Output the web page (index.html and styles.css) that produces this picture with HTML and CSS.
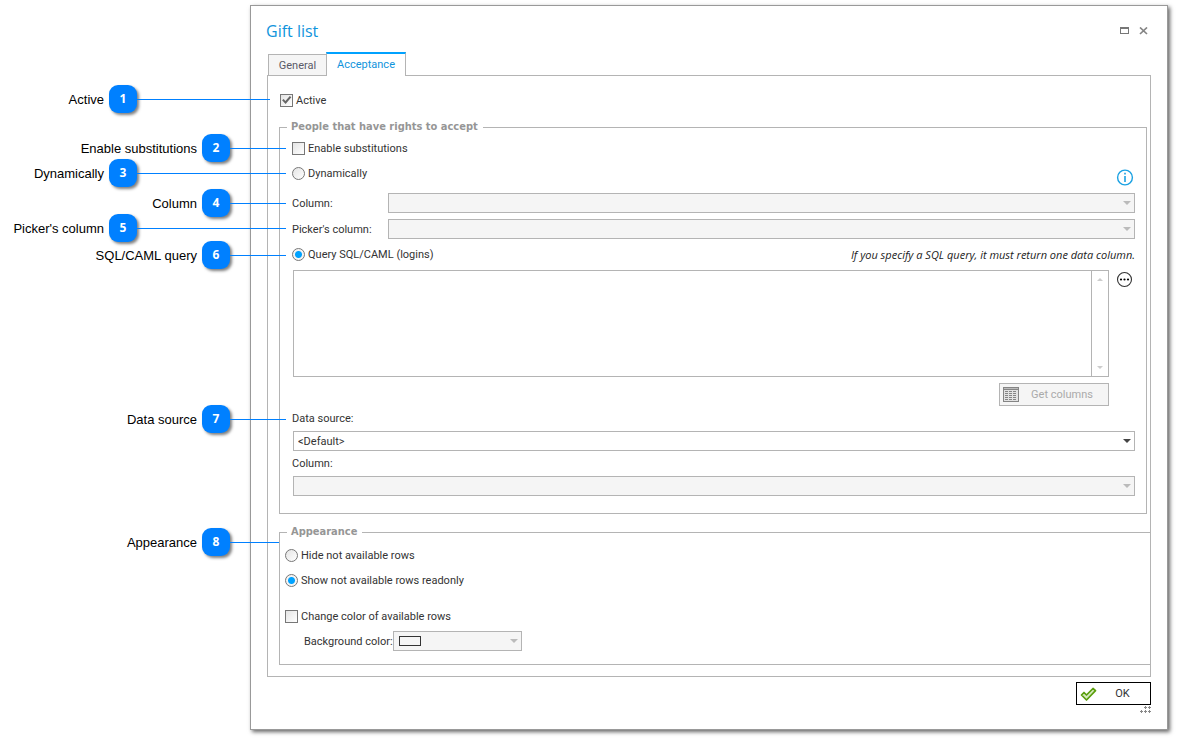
FILE: index.html
```html
<!DOCTYPE html>
<html lang="en">
<head>
<meta charset="utf-8">
<title>Gift list</title>
<link rel="stylesheet" href="styles.css">
</head>
<body>
<main class="stage">
  <section class="window" aria-labelledby="window-title">
    <header class="titlebar">
      <h1 class="title" id="window-title">Gift list</h1>
      <div class="window-actions">
        <button class="icon-button" type="button" aria-label="Maximize">
          <svg width="9" height="8" viewBox="0 0 9 8" shape-rendering="crispEdges"><path d="M0 0h9v7H0zM1 2v4h7V2z" fill="#777" fill-rule="evenodd"/></svg>
        </button>
        <button class="icon-button" type="button" aria-label="Close">
          <svg width="9" height="8" viewBox="0 0 9 8"><path d="M1 .5l7 6.500M8 .5l-7 6.500" stroke="#858585" stroke-width="1.700"/></svg>
        </button>
      </div>
    </header>

    <div class="tabs" role="tablist">
      <button class="tab" type="button" role="tab" aria-selected="false">General</button>
      <button class="tab tab-selected" type="button" role="tab" aria-selected="true">Acceptance</button>
    </div>

    <div class="panel" role="tabpanel">
      <label class="option option-active"><input class="check" type="checkbox" checked>Active</label>

      <fieldset class="group people">
        <legend class="legend">People that have rights to accept</legend>
        <label class="option"><input class="check" type="checkbox">Enable substitutions</label>
        <div class="row dynamic-row">
          <label class="option"><input class="radio" type="radio" name="source">Dynamically</label>
          <button class="icon-button side-button" type="button" aria-label="Information">
            <svg width="18" height="18" viewBox="0 0 18 18" fill="none" stroke="#1ba1e2"><circle cx="9" cy="8.500" r="7.4" stroke-width="1.4"/><path d="M9 7v6M9 3.700v1.8" stroke-width="1.6"/></svg>
          </button>
        </div>
        <div class="field-grid">
          <label for="column">Column:</label>
          <span class="select-box disabled"><select class="select" id="column" disabled></select></span>
          <label for="picker">Picker's column:</label>
          <span class="select-box disabled"><select class="select" id="picker" disabled></select></span>
        </div>
        <div class="row query-row">
          <label class="option"><input class="radio" type="radio" name="source" checked>Query SQL/CAML (logins)</label>
          <em class="hint">If you specify a SQL query, it must return one data column.</em>
        </div>
        <div class="editor-row">
          <div class="editor">
            <textarea class="query" aria-label="Query"></textarea>
            <div class="scroller"><span class="scroll-up"></span><span class="scroll-down"></span></div>
          </div>
          <button class="icon-button side-button" type="button" aria-label="Edit query">
            <svg width="18" height="18" viewBox="0 0 18 18"><circle cx="8.500" cy="9.500" r="7" fill="none" stroke="#333" stroke-width="1.1"/><circle cx="5" cy="9.500" r="1.1"/><circle cx="8.500" cy="9.500" r="1.1"/><circle cx="12" cy="9.500" r="1.1"/></svg>
          </button>
        </div>
        <div class="columns-row">
          <button class="columns-button" type="button" disabled>
            <svg width="16" height="16" viewBox="0 0 16 16" shape-rendering="crispEdges"><path d="M0 0h16v15H0z" fill="#858585"/><path d="M1 3h14v11H1z" fill="#e2e2e2"/><path d="M1 1h14v1H1z" fill="#bbb"/><path d="M2 4.500h12M2 6.500h12M2 8.500h12M2 10.500h12M2 12.500h12" stroke="#858585" stroke-dasharray="3 1"/></svg>
            <span class="columns-text">Get columns</span>
          </button>
        </div>
        <label class="field-label" for="data-source">Data source:</label>
        <span class="select-box"><select class="select" id="data-source"><option>&lt;Default&gt;</option></select></span>
        <label class="field-label" for="data-column">Column:</label>
        <span class="select-box disabled"><select class="select" id="data-column" disabled></select></span>
      </fieldset>

      <fieldset class="group appearance">
        <legend class="legend">Appearance</legend>
        <label class="option"><input class="radio" type="radio" name="rows">Hide not available rows</label>
        <label class="option"><input class="radio" type="radio" name="rows" checked>Show not available rows readonly</label>
        <label class="option option-color"><input class="check" type="checkbox">Change color of available rows</label>
        <div class="color-row">
          <label class="color-label" for="background">Background color:</label>
          <span class="select-box color-box disabled"><select class="select" id="background" disabled></select></span>
        </div>
      </fieldset>
    </div>

    <footer class="footer">
      <button class="ok-button" type="button">
        <svg width="18" height="16" viewBox="0 0 18 16"><path d="M1.500 9l2.500-2.500 2.500 2.500 6.500-6.500 2.500 2.200L6.500 14z" fill="#d6eabf" stroke="#5a9e0c" stroke-width="1.700" stroke-linejoin="round"/></svg>
        <span class="ok-text">OK</span>
      </button>
      <svg class="grip" width="11" height="7" viewBox="0 0 11 7"><path d="M4 1.500h3M8 1.500h3M0 5.500h3M4 5.500h3M8 5.500h3M5.500 0v3M9.500 0v3M1.500 4v3M5.500 4v3M9.500 4v3" stroke="#888"/></svg>
    </footer>
  </section>

  <div class="callout near c1"><span class="callout-label">Active</span><b class="badge">1</b></div>
  <div class="callout c2"><span class="callout-label">Enable substitutions</span><b class="badge">2</b></div>
  <div class="callout near c3"><span class="callout-label">Dynamically</span><b class="badge">3</b></div>
  <div class="callout c4"><span class="callout-label">Column</span><b class="badge">4</b></div>
  <div class="callout near c5"><span class="callout-label">Picker's column</span><b class="badge">5</b></div>
  <div class="callout c6"><span class="callout-label">SQL/CAML query</span><b class="badge">6</b></div>
  <div class="callout c7"><span class="callout-label">Data source</span><b class="badge">7</b></div>
  <div class="callout c8"><span class="callout-label">Appearance</span><b class="badge">8</b></div>
</main>
</body>
</html>
```

FILE: styles.css
```css
*, *::before, *::after { box-sizing: border-box; }

body {
  margin: 0;
  background: #fff;
  color: #333;
  font: 11px/15px Roboto, "Open Sans", sans-serif;
}

button, select, textarea { font: inherit; color: inherit; border-radius: 0; }

svg { display: block; flex: none; }

.stage { position: relative; padding: 5px 9px 9px 250px; }

/* Dialog window */
.window {
  border: 1px solid #999;
  background: #fff;
  padding: 10px 16px 16px;
  box-shadow: 2px 2px 4px rgba(0, 0, 0, 0.6);
}

.titlebar {
  display: flex;
  align-items: center;
  justify-content: space-between;
  height: 29px;
  padding-right: 3px;
}

.title { margin: 0 0 0 -1px; font: 16px/24px "Open Sans", "Noto Sans", sans-serif; color: #0f94dc; }
.window-actions { display: flex; gap: 10px; }
.icon-button { display: flex; border: 0; padding: 0; background: none; }
.side-button { padding-right: 1px; }

/* Tabs */
.tabs {
  display: flex;
  align-items: flex-end;
  height: 31px;
  padding-left: 1px;
  margin-bottom: -1px;
  position: relative;
}

.tab {
  width: 59px;
  height: 22px;
  padding: 0;
  border: 1px solid #b4b4b4;
  background: #f5f5f5;
  color: #5a5a68;
}

.tab-selected {
  width: 80px;
  height: 24px;
  padding-bottom: 2px;
  margin-left: -1px;
  border-top: 2px solid #00a2ff;
  border-bottom: 0;
  background: #fff;
  color: #0f94dc;
}

.panel { border: 1px solid #b4b4b4; padding: 13px 0 11px 11px; }

/* Options */
.option { display: flex; align-items: center; gap: 3px; height: 22px; width: fit-content; }
.option-active { margin: 0 0 9px 1px; }

.check, .radio {
  appearance: none;
  width: 13px;
  height: 13px;
  margin: 0;
  border: 1px solid #777;
  background: linear-gradient(135deg, #e4e4e4, #fff);
}

.check:checked::before {
  content: "";
  display: block;
  width: 11px;
  height: 11px;
  background: #666;
  clip-path: polygon(10% 52%, 24% 40%, 40% 58%, 80% 14%, 94% 26%, 42% 86%);
}

.radio { border-radius: 50%; }
.radio:checked { background: radial-gradient(circle, #00a2ff 3px, #f4f4f4 4px); }

/* Groups */
.group { min-width: 0; margin: 0; border: 1px solid #b4b4b4; }
.people { margin-right: 3px; padding: 3px 11px 17px 12px; }
.people > .option { margin-bottom: 3px; }

.legend {
  padding: 0 5px 0 4px;
  margin-left: -5px;
  font: bold 11px/14px "DejaVu Sans Condensed", "DejaVu Sans", sans-serif;
  color: #969696;
}

.row { display: flex; justify-content: space-between; height: 31px; }
.dynamic-row { align-items: center; }
.dynamic-row .option { align-self: flex-start; }
.query-row { align-items: center; }
.hint { color: #222; font-family: "Open Sans", "Noto Sans", sans-serif; }

.field-grid {
  display: grid;
  grid-template-columns: 96px 1fr;
  row-gap: 6px;
  align-items: center;
}

.select-box { position: relative; display: flex; height: 20px; color: #444; }
.select-box.disabled { color: #bbb; }

.select {
  appearance: none;
  width: 100%;
  padding: 0 20px 0 4px;
  border: 1px solid #b4b4b4;
  background: #fff;
  color: #333;
}

.select:disabled { background: #f5f5f5; opacity: 1; }

.select-box::after {
  content: "";
  position: absolute;
  right: 4px;
  top: 8px;
  border: 4px solid transparent;
  border-top-color: currentColor;
  border-bottom: 0;
}

.people > .select-box, .editor { margin-left: 1px; }

.editor-row { display: flex; align-items: flex-start; gap: 7px; }
.editor { display: flex; flex: 1; height: 107px; border: 1px solid #b4b4b4; }
.query { flex: 1; min-width: 0; border: 0; padding: 2px 4px; resize: none; background: #fff; }

.scroller {
  display: flex;
  flex-direction: column;
  justify-content: space-between;
  align-items: center;
  width: 17px;
  padding: 7px 0;
  border-left: 1px solid #b4b4b4;
}

.scroll-up, .scroll-down { border: 3px solid transparent; }
.scroll-up { border-bottom-color: #ccc; border-top: 0; }
.scroll-down { border-top-color: #ccc; border-bottom: 0; }

.columns-row { display: flex; justify-content: flex-end; padding: 6px 26px 0 0; }

.columns-button, .ok-button {
  display: flex;
  align-items: center;
  height: 23px;
  padding: 0 3px;
  border: 1px solid #b4b4b4;
  background: #f5f5f5;
}

.columns-button { width: 110px; color: #aaa; }
.columns-text, .ok-text { flex: 1; text-align: center; }

.field-label { display: flex; align-items: center; height: 25px; }

.appearance { margin-top: 11px; border-right: 0; padding: 5px 0 13px 5px; }
.appearance .legend { margin-left: 2px; }
.appearance > .option + .option { margin-top: 3px; }
.appearance > .option + .option-color { margin-top: 14px; }

.color-row { display: flex; align-items: center; margin-top: 4px; padding-left: 19px; }
.color-label { width: 89px; }
.color-box { width: 129px; }

.color-box::before {
  content: "";
  position: absolute;
  left: 6px;
  top: 5px;
  width: 22px;
  height: 10px;
  border: 1px solid #333;
}

/* Footer */
.footer { display: flex; flex-direction: column; align-items: flex-end; padding-top: 5px; }
.ok-button { width: 75px; border-color: #000; background: #fff; }
.grip { margin-top: 1px; }

/* Numbered callouts over the window */
.callout {
  position: absolute;
  left: 0;
  display: flex;
  align-items: center;
  gap: 5px;
  width: 286px;
  height: 28px;
  color: #000;
  font: 13px/18px "Liberation Sans", Arial, sans-serif;
}

.callout-label { width: 197px; padding-top: 1px; text-align: right; }
.near .callout-label { width: 104px; }

.callout::after { content: ""; flex: 1; height: 1px; margin-left: -5px; background: #0080ff; }

.badge {
  width: 28px;
  height: 28px;
  border-radius: 9px;
  background: #0080ff;
  box-shadow: 2px 2px 3px rgba(0, 0, 0, 0.5);
  color: #fff;
  font: bold 12px/28px "Open Sans", sans-serif;
  text-align: center;
}

.c1 { top: 85px; width: 270px; }
.c2 { top: 134px; }
.c3 { top: 159px; }
.c4 { top: 189px; }
.c5 { top: 214px; }
.c6 { top: 241px; }
.c7 { top: 405px; }
.c8 { top: 528px; width: 279px; }
```
